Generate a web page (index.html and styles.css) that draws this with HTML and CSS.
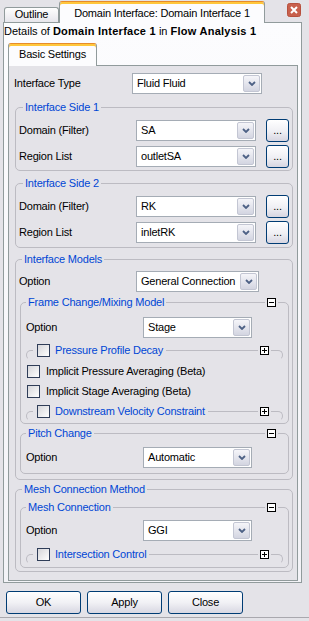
FILE: index.html
```html
<!DOCTYPE html>
<html>
<head>
<meta charset="utf-8">
<title>Domain Interface</title>
<link rel="stylesheet" href="styles.css">
</head>
<body>
<div class="tabbar">
  <div class="tab tab-off">Outline</div>
  <div class="tab tab-on">Domain Interface: Domain Interface 1</div>
  <div class="xbtn"><svg width="14" height="14" viewBox="0 0 14 14"><rect x="0.5" y="0.5" width="13" height="13" rx="2" fill="#c8604c" stroke="#b7513e"/><path d="M4 4L10 10M10 4L4 10" stroke="#fff" stroke-width="2"/></svg></div>
</div>
<div class="outer">
  <div class="details">Details of <b>Domain Interface 1</b> in <b>Flow Analysis 1</b></div>
  <div class="subtabs"><div class="stab">Basic Settings</div></div>
  <div class="inner">
    <div class="row r-type"><span class="lbl w118">Interface Type</span><div class="combo w130"><span class="v">Fluid Fluid</span><span class="a"><svg width="8" height="5" viewBox="0 0 8 5"><path d="M1 1l3 3 3-3" fill="none" stroke="#4d6185" stroke-width="1.8"/></svg></span></div></div>

    <div class="grp g-side1">
      <div class="gt"><span class="gtt ml7">Interface Side 1</span></div>
      <div class="row r-dom"><span class="lbl w117">Domain (Filter)</span><div class="combo w120"><span class="v">SA</span><span class="a"><svg width="8" height="5" viewBox="0 0 8 5"><path d="M1 1l3 3 3-3" fill="none" stroke="#4d6185" stroke-width="1.8"/></svg></span></div><div class="dots">...</div></div>
      <div class="row r-dom r-reg"><span class="lbl w117">Region List</span><div class="combo w120"><span class="v">outletSA</span><span class="a"><svg width="8" height="5" viewBox="0 0 8 5"><path d="M1 1l3 3 3-3" fill="none" stroke="#4d6185" stroke-width="1.8"/></svg></span></div><div class="dots">...</div></div>
    </div>

    <div class="grp g-side2">
      <div class="gt"><span class="gtt ml7">Interface Side 2</span></div>
      <div class="row r-dom"><span class="lbl w117">Domain (Filter)</span><div class="combo w120"><span class="v">RK</span><span class="a"><svg width="8" height="5" viewBox="0 0 8 5"><path d="M1 1l3 3 3-3" fill="none" stroke="#4d6185" stroke-width="1.8"/></svg></span></div><div class="dots">...</div></div>
      <div class="row r-dom r-reg"><span class="lbl w117">Region List</span><div class="combo w120"><span class="v">inletRK</span><span class="a"><svg width="8" height="5" viewBox="0 0 8 5"><path d="M1 1l3 3 3-3" fill="none" stroke="#4d6185" stroke-width="1.8"/></svg></span></div><div class="dots">...</div></div>
    </div>

    <div class="grp g-models">
      <div class="gt"><span class="gtt ml6">Interface Models</span></div>
      <div class="row r-opt1"><span class="lbl w117">Option</span><div class="combo w123"><span class="v">General Connection</span><span class="a"><svg width="8" height="5" viewBox="0 0 8 5"><path d="M1 1l3 3 3-3" fill="none" stroke="#4d6185" stroke-width="1.8"/></svg></span></div></div>

      <div class="grp nest g-frame">
        <div class="gt"><span class="gtt ml5">Frame Change/Mixing Model</span><span class="pmw mr10"><svg class="pm" width="9" height="9" viewBox="0 0 9 9"><rect x="0.5" y="0.5" width="8" height="8" fill="#fff" stroke="#000"/><path d="M2 4.5H7" stroke="#000"/></svg></span></div>
        <div class="row r-opt2 mt8"><span class="lbl w117">Option</span><div class="combo w109"><span class="v">Stage</span><span class="a"><svg width="8" height="5" viewBox="0 0 8 5"><path d="M1 1l3 3 3-3" fill="none" stroke="#4d6185" stroke-width="1.8"/></svg></span></div></div>
        <div class="cg cg1">
          <div class="gt"><span class="cgt"><span class="cb"></span>Pressure Profile Decay</span><span class="pmw mr11"><svg class="pm" width="9" height="9" viewBox="0 0 9 9"><rect x="0.5" y="0.5" width="8" height="8" fill="#fff" stroke="#000"/><path d="M2 4.5H7M4.5 2V7" stroke="#000"/></svg></span></div>
        </div>
        <div class="row r-chk mt5"><span class="cb"></span><span class="ct">Implicit Pressure Averaging (Beta)</span></div>
        <div class="row r-chk mt7"><span class="cb"></span><span class="ct">Implicit Stage Averaging (Beta)</span></div>
        <div class="cg cg2">
          <div class="gt"><span class="cgt"><span class="cb"></span>Downstream Velocity Constraint</span><span class="pmw mr11"><svg class="pm" width="9" height="9" viewBox="0 0 9 9"><rect x="0.5" y="0.5" width="8" height="8" fill="#fff" stroke="#000"/><path d="M2 4.5H7M4.5 2V7" stroke="#000"/></svg></span></div>
        </div>
      </div>

      <div class="grp nest g-pitch">
        <div class="gt"><span class="gtt ml5">Pitch Change</span><span class="pmw mr10"><svg class="pm" width="9" height="9" viewBox="0 0 9 9"><rect x="0.5" y="0.5" width="8" height="8" fill="#fff" stroke="#000"/><path d="M2 4.5H7" stroke="#000"/></svg></span></div>
        <div class="row r-opt2 mt7"><span class="lbl w117">Option</span><div class="combo w109"><span class="v">Automatic</span><span class="a"><svg width="8" height="5" viewBox="0 0 8 5"><path d="M1 1l3 3 3-3" fill="none" stroke="#4d6185" stroke-width="1.8"/></svg></span></div></div>
      </div>
    </div>

    <div class="grp g-method">
      <div class="gt"><span class="gtt ml6">Mesh Connection Method</span></div>
      <div class="grp nest g-mesh">
        <div class="gt"><span class="gtt ml5">Mesh Connection</span><span class="pmw mr10"><svg class="pm" width="9" height="9" viewBox="0 0 9 9"><rect x="0.5" y="0.5" width="8" height="8" fill="#fff" stroke="#000"/><path d="M2 4.5H7" stroke="#000"/></svg></span></div>
        <div class="row r-opt2 mt6"><span class="lbl w117">Option</span><div class="combo w109"><span class="v">GGI</span><span class="a"><svg width="8" height="5" viewBox="0 0 8 5"><path d="M1 1l3 3 3-3" fill="none" stroke="#4d6185" stroke-width="1.8"/></svg></span></div></div>
        <div class="cg cg3">
          <div class="gt"><span class="cgt"><span class="cb"></span>Intersection Control</span><span class="pmw mr11"><svg class="pm" width="9" height="9" viewBox="0 0 9 9"><rect x="0.5" y="0.5" width="8" height="8" fill="#fff" stroke="#000"/><path d="M2 4.5H7M4.5 2V7" stroke="#000"/></svg></span></div>
        </div>
      </div>
    </div>
  </div>
</div>
<div class="btns">
  <div class="btn">OK</div>
  <div class="btn">Apply</div>
  <div class="btn">Close</div>
</div>
<div class="foot"></div>
</body>
</html>
```

FILE: styles.css
```css
* { box-sizing: border-box; margin: 0; padding: 0; }
html, body { width: 309px; height: 621px; overflow: hidden; }
body {
  background: #e4e3e8;
  font-family: "Liberation Sans", Arial, sans-serif;
  font-size: 11px;
  letter-spacing: -0.2px;
  line-height: 13px;
  color: #000;
}

/* top tabs */
.tabbar {
  height: 23px;
  margin-bottom: -1px;
  display: flex;
  align-items: flex-end;
  padding-left: 4px;
  position: relative;
  z-index: 1;
}
.tab {
  border: 1px solid #919b9c;
  border-bottom: none;
  border-radius: 3px 3px 0 0;
  text-align: center;
  white-space: nowrap;
}
.tab-off {
  width: 55px;
  height: 15px;
  margin-bottom: 1px;
  background: linear-gradient(#fefefe, #e7e6ec);
  line-height: 13px;
}
.tab-on {
  width: 206px;
  height: 22px;
  background: #fcfcfe;
  border-top-color: #e68b2c;
  box-shadow: inset 0 2px 0 #ffc73c;
  padding-top: 5px;
}
.xbtn {
  align-self: flex-start;
  margin: 3px 8px 0 auto;
  width: 14px;
  height: 14px;
}
.xbtn svg { display: block; }

/* outer pane */
.outer {
  margin-left: 3px;
  width: 299px;
  height: 561px;
  border: 1px solid #919b9c;
  background: linear-gradient(#fcfcfe, #f3f3f7);
}
.details {
  height: 16px;
  line-height: 16px;
  white-space: nowrap;
  letter-spacing: 0;
}
.details b { letter-spacing: 0.25px; }
.subtabs {
  height: 27px;
  margin-bottom: -1px;
  padding-left: 4px;
  display: flex;
  align-items: flex-end;
  position: relative;
  z-index: 1;
}
.stab {
  width: 89px;
  height: 23px;
  border: 1px solid #919b9c;
  border-bottom: none;
  border-top-color: #e68b2c;
  box-shadow: inset 0 2px 0 #ffc73c;
  border-radius: 3px 3px 0 0;
  background: #fcfcfe;
  text-align: center;
  padding-top: 4px;
}
.inner {
  margin-left: 4px;
  width: 290px;
  height: 516px;
  border: 1px solid #919b9c;
  background: #e4e3e8;
}

/* rows */
.row { display: flex; align-items: center; }
.lbl { flex: none; white-space: nowrap; }
.w117 { width: 117px; }
.w118 { width: 118px; }
.r-type { margin-top: 7px; padding-left: 5px; height: 21px; }
.r-dom { height: 23px; padding-left: 3px; margin-top: 5px; }
.r-dom.r-reg { margin-top: 3px; }
.r-opt1 { height: 21px; padding-left: 3px; margin-top: 5px; }
.r-opt2 { height: 21px; padding-left: 5px; }
.r-chk { height: 13px; padding-left: 6px; }
.ct { margin-left: 6px; white-space: nowrap; }
.mt5 { margin-top: 5px; }
.mt6 { margin-top: 6px; }
.mt7 { margin-top: 7px; }
.mt8 { margin-top: 8px; }

/* combo */
.combo {
  flex: none;
  height: 21px;
  border: 1px solid #a5acb5;
  background: #fff;
  display: flex;
}
.w109 { width: 109px; }
.w120 { width: 120px; }
.w123 { width: 123px; }
.w130 { width: 130px; }
.combo .v {
  flex: 1;
  padding-left: 4px;
  line-height: 19px;
  white-space: nowrap;
  overflow: hidden;
}
.combo .a {
  flex: none;
  width: 17px;
  margin: 1px;
  border: 1px solid #c3c6d3;
  border-radius: 2px;
  background: linear-gradient(#f5f5f9, #d3d5e1);
  display: flex;
  align-items: center;
  justify-content: center;
}
.combo .a svg { display: block; }

.dots {
  flex: none;
  width: 23px;
  height: 23px;
  margin-left: 10px;
  border: 1px solid #003c74;
  border-radius: 3px;
  background: linear-gradient(#ffffff, #efeff4 55%, #d7d6e1);
  text-align: center;
  line-height: 21px;
}

/* group boxes */
.grp {
  border: 1px solid #bcbbc2;
  border-radius: 5px;
}
.gt {
  height: 13px;
  margin-top: -7px;
  display: flex;
  align-items: center;
}
.gtt {
  background: #e4e3e8;
  color: #0046d5;
  padding: 0 2px;
  white-space: nowrap;
}
.ml5 { margin-left: 5px; }
.ml6 { margin-left: 6px; }
.ml7 { margin-left: 7px; }
.pmw {
  margin-left: auto;
  background: #e4e3e8;
  padding: 0 2px;
  display: flex;
}
.pm { display: block; }
.mr10 { margin-right: 10px; }
.mr11 { margin-right: 11px; }

.g-side1 { margin: 13px 4px 0 6px; padding-bottom: 2px; }
.g-side2 { margin: 12px 4px 0 6px; padding-bottom: 3px; }
.g-models { margin: 11px 4px 0 6px; padding-bottom: 5px; }
.g-method { margin: 9px 4px 0 6px; padding-bottom: 3px; }
.nest { margin-left: 4px; margin-right: 3px; }
.g-frame { margin-top: 10px; padding-bottom: 2px; }
.g-pitch { margin-top: 9px; padding-bottom: 5px; }
.g-mesh { margin-top: 11px; padding-bottom: 3px; }

/* collapsed groups */
.cg {
  height: 10px;
  margin: 0 5px 0 5px;
  border: 1px solid #bcbbc2;
  border-bottom-color: transparent;
  border-radius: 5px;
}
.cg1 { margin-top: 12px; }
.cg2 { margin-top: 13px; }
.cg3 { margin-top: 13px; }
.cgt {
  margin-left: 6px;
  padding: 0 3px 0 4px;
  background: #e4e3e8;
  color: #0046d5;
  display: flex;
  align-items: center;
  white-space: nowrap;
}
.cgt .cb { margin-right: 5px; }

.cb {
  flex: none;
  display: block;
  width: 13px;
  height: 13px;
  border: 1px solid #2f3d58;
  background: linear-gradient(135deg, #d6d6da, #ffffff);
}

/* buttons */
.btns {
  display: flex;
  gap: 6px;
  padding-left: 6px;
  margin-top: 8px;
}
.btn {
  width: 75px;
  height: 23px;
  border: 1px solid #003c74;
  border-radius: 3px;
  background: linear-gradient(#ffffff, #f1f1f5 50%, #d8d7e2);
  text-align: center;
  line-height: 21px;
}
.foot {
  margin-top: 3px;
  height: 1px;
  background: #a9a8ae;
}
```
